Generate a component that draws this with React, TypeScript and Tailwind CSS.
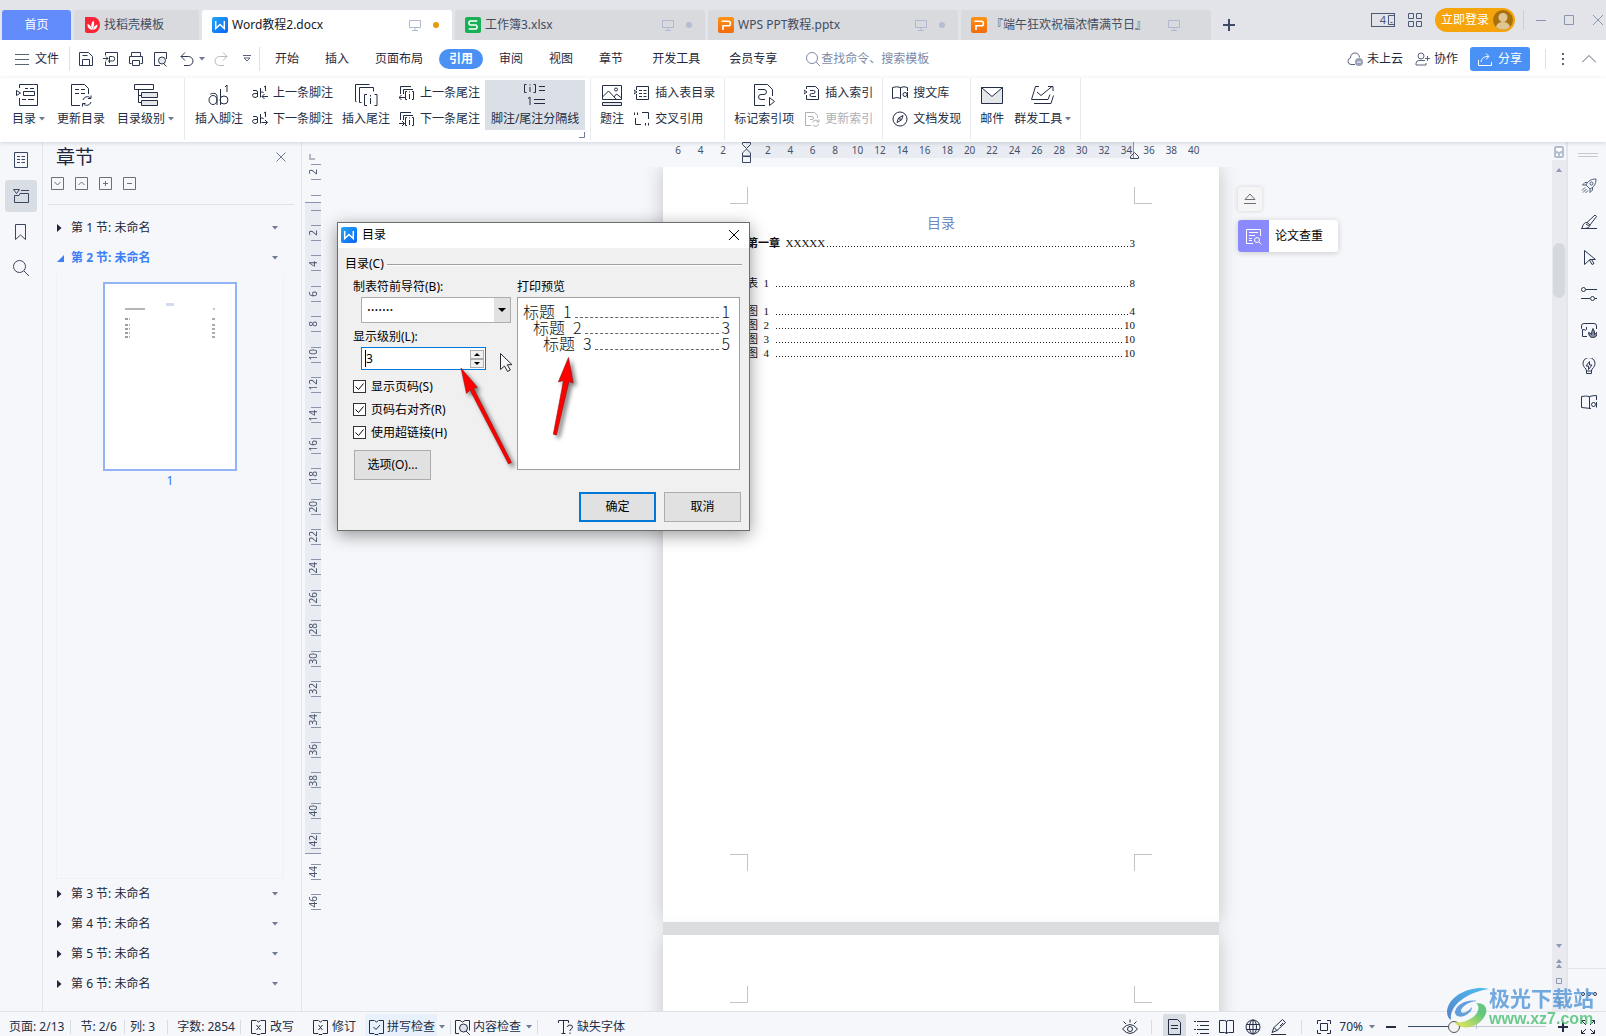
import React from "react";

type IconProps = {
  w?: number;
  h?: number;
  d?: string;
  className?: string;
  sw?: number;
  children?: React.ReactNode;
};

function Icon({ w = 16, h = 16, d, className = "", sw = 1, children }: IconProps) {
  return (
    <svg
      width={w}
      height={h}
      viewBox={`0 0 ${w} ${h}`}
      fill="none"
      stroke="currentColor"
      strokeWidth={sw}
      className={`shrink-0 ${className}`}
      aria-hidden="true"
    >
      {d && <path d={d} />}
      {children}
    </svg>
  );
}

function Caret({ className = "" }: { className?: string }) {
  return (
    <svg width="6" height="4" viewBox="0 0 6 4" className={`shrink-0 text-[#6f7a93] ${className}`} aria-hidden="true">
      <path d="M0 0h6L3 3.5z" fill="currentColor" />
    </svg>
  );
}

function WriterLogo() {
  return (
    <svg width="16" height="16" viewBox="0 0 16 16" className="shrink-0" aria-hidden="true">
      <defs>
        <linearGradient id="writer" x1="0" y1="0" x2="1" y2="1">
          <stop offset="0" stopColor="#22a7f8" />
          <stop offset="1" stopColor="#0d62f5" />
        </linearGradient>
      </defs>
      <rect width="16" height="16" rx="2" fill="url(#writer)" />
      <path d="M3.7 4v7.500L8 7.500l4.300 4V4" fill="none" stroke="#fff" strokeWidth="1.500" />
    </svg>
  );
}

function SheetLogo() {
  return (
    <svg width="16" height="16" viewBox="0 0 16 16" className="shrink-0" aria-hidden="true">
      <rect width="16" height="16" rx="2" fill="#17b054" />
      <path d="M12.300 4H5.500Q4 4 4 5.500V6.500Q4 8 5.500 8h5Q12 8 12 9.500v1Q12 12 10.500 12H3.700" fill="none" stroke="#fff" strokeWidth="1.600" />
    </svg>
  );
}

function SlideLogo() {
  return (
    <svg width="16" height="16" viewBox="0 0 16 16" className="shrink-0" aria-hidden="true">
      <defs>
        <linearGradient id="slide" x1="0" y1="0" x2="0" y2="1">
          <stop offset="0" stopColor="#ff9314" />
          <stop offset="1" stopColor="#f26a0d" />
        </linearGradient>
      </defs>
      <rect width="16" height="16" rx="2" fill="url(#slide)" />
      <path d="M3.500 4.200h7Q12.300 4.200 12.300 6v1Q12.300 8.800 10.500 8.800H5V13" fill="none" stroke="#fff" strokeWidth="1.600" />
    </svg>
  );
}

function DocerLogo() {
  return (
    <svg width="15" height="16" viewBox="0 0 15 16" className="shrink-0" aria-hidden="true">
      <path d="M0 0h8a7 8 0 0 1 0 16H2a2 2 0 0 1-2-2z" fill="#fb2437" />
      <path d="M7 13C3 12 2.500 9.500 2.500 7 5 8 6.500 9.500 7 13zM7.300 13C5.500 9 6 6 8.500 3.500 9.500 6 9.500 9 7.300 13zM8 13c.500-3 2-5 4.500-5.500 0 3-1.500 5-4.500 5.500z" fill="#fff" />
    </svg>
  );
}

const monitor = "M.5 1.500h11v7H.5zM6 8.500v3M3 11.500h6";

function DocTab({ logo, title, active, dot = true }: { logo: React.ReactNode; title: string; active?: boolean; dot?: boolean }) {
  return (
    <button
      type="button"
      className={`flex h-[30px] w-[250px] items-center rounded-t-[3px] pr-[13px] pl-[10px] ${active ? "bg-white text-[#15181f]" : "bg-[#d9dade] text-[#424c63]"}`}
    >
      {logo}
      <span className="ml-1 flex-1 truncate text-left">{title}</span>
      <Icon w={12} h={12} d={monitor} className="text-[#b0b9d0]" />
      <span className={`ml-3 size-[6px] rounded-full ${dot ? (active ? "bg-[#e69b0c]" : "bg-[#b4bdd2]") : "bg-transparent"}`} />
    </button>
  );
}

function TitleBar() {
  return (
    <header className="flex h-10 items-start justify-between bg-[#e2e4e9]">
      <div className="flex min-w-0 gap-[3px] pt-[10px] pl-[2px]">
        <button type="button" className="h-[30px] w-[69px] rounded-t-[3px] bg-[#628cfb] text-white">首页</button>
        <button type="button" className="flex h-[30px] w-[125px] items-center gap-1 rounded-t-[3px] bg-[#d9dade] pl-[11px] text-[#424c63]">
          <DocerLogo />
          找稻壳模板
        </button>
        <DocTab logo={<WriterLogo />} title="Word教程2.docx" active />
        <DocTab logo={<SheetLogo />} title="工作簿3.xlsx" />
        <DocTab logo={<SlideLogo />} title="WPS PPT教程.pptx" />
        <DocTab logo={<SlideLogo />} title="『端午狂欢祝福浓情满节日』" dot={false} />
        <button type="button" aria-label="新建标签" className="ml-2 flex h-[30px] w-[14px] items-center text-[#3f4b66]">
          <Icon w={14} h={14} sw={2} d="M7 1v12M1 7h12" />
        </button>
      </div>
      <div className="flex h-10 items-center pr-[3px] text-[#4e5a75]">
        <button type="button" aria-label="窗口数" className="flex h-[14px] w-6 items-center justify-end gap-px border border-current text-[11px] leading-[12px]">
          4
          <Icon w={7} h={12} d="M7 1.500H1.500v9H7M3.500 8.500h2" />
        </button>
        <button type="button" aria-label="应用" className="ml-[13px]">
          <Icon w={14} h={14} d="M.5.5h5v5h-5zM8.500.5h5v5h-5zM.5 8.500h5v5h-5zM8.500 8.500h5v5h-5z" />
        </button>
        <button type="button" className="ml-[13px] flex h-6 w-20 items-center justify-between rounded-full bg-[#f5a50b] pr-[2px] pl-[6px] text-white">
          立即登录
          <svg width="20" height="20" viewBox="0 0 20 20" aria-hidden="true">
            <circle cx="10" cy="10" r="10" fill="#a9710c" />
            <circle cx="10" cy="7.500" r="4.500" fill="#dfc594" />
            <path d="M3 17c1-4 4-5 7-5s6 1 7 5a10 10 0 0 1-14 0z" fill="#dfc594" />
          </svg>
        </button>
        <span className="ml-2 h-5 w-px bg-[#cbced6]" />
        <button type="button" aria-label="最小化" className="ml-3 text-[#8a96b0]"><Icon w={10} h={10} d="M0 5.500h10" /></button>
        <button type="button" aria-label="最大化" className="ml-[18px] text-[#8a96b0]"><Icon w={10} h={10} d="M.5.5h9v9h-9z" /></button>
        <button type="button" aria-label="关闭" className="ml-[19px] text-[#8a96b0]"><Icon w={10} h={10} d="M0 0l10 10M10 0L0 10" /></button>
      </div>
    </header>
  );
}

function MenuRow() {
  return (
    <nav className="flex h-[38px] items-center justify-between bg-white text-[#1f2940]">
      <div className="flex items-center whitespace-nowrap">
        <button type="button" className="ml-[15px] flex items-center gap-[6px]">
          <Icon w={14} h={12} d="M0 1.500h14M0 6.500h14M0 11.500h14" className="text-[#5a6478]" />
          文件
        </button>
        <span className="ml-[10px] h-6 w-px bg-[#dde0e6]" />
        <div className="ml-2 flex items-center gap-[9px] text-[#2e3850]">
          <Icon d="M1.500 14.500v-13h9l4 4v9zM4.500 14.500V8.500h7v6M4.500 4.500h5" />
          <Icon d="M2.500 4.500v-3h12v13h-12v-4M0 7.500h5M3 5.500l2 2-2 2M6.500 12V5.500h3a2 2 0 0 1 0 4.500H5" />
          <Icon d="M3.500 5.500v-4h9v4M3.500 12.500h-2v-7h13v7h-2M4.500 9.500h7v5h-7z" />
          <Icon><path d="M7 14.500H1.500v-13h12V8M13.500 15.500l-2.500-2.500" /><circle cx="9" cy="9.500" r="3.500" fill="#e4e7ec" /></Icon>
          <Icon w={14} h={16} d="M5 1.500l-4 4 4 4M1 5.500h7.500a4.500 4.500 0 0 1 0 9H4" className="ml-[2px]" />
        </div>
        <Caret className="ml-[5px]" />
        <Icon w={14} h={16} d="M9 1.500l4 4-4 4M13 5.500H5.500a4.500 4.500 0 0 0 0 9H10" className="ml-[9px] text-[#b3b8c2]" />
        <Icon w={8} h={8} d="M0 .5h8M1 3l3 3 3-3z" className="ml-[15px] text-[#5a6478]" />
        <span className="ml-2 h-6 w-px bg-[#dde0e6]" />
        <div className="ml-[15px] flex items-center gap-[26px]">
          <button type="button">开始</button>
          <button type="button">插入</button>
          <button type="button">页面布局</button>
          <button type="button" className="-mx-[10px] h-5 rounded-full bg-[#4a90f5] px-[10px] font-bold text-white">引用</button>
          <button type="button">审阅</button>
          <button type="button">视图</button>
          <button type="button">章节</button>
          <button type="button" className="ml-[3px]">开发工具</button>
          <button type="button" className="ml-[3px]">会员专享</button>
          <label className="ml-[3px] flex items-center gap-px text-[#7e8aa5]">
            <Icon w={14} h={14}><circle cx="6" cy="6" r="5.500" /><path d="M10 10l4 4" /></Icon>
            <input aria-label="查找命令、搜索模板" placeholder="查找命令、搜索模板" className="w-[130px] bg-transparent text-[12px] leading-[18px] outline-none placeholder:text-[#7e8aa5]" />
          </label>
        </div>
      </div>
      <div className="flex items-center whitespace-nowrap pr-[10px]">
        <button type="button" className="flex items-center gap-1">
          <Icon className="text-[#5a6478]"><path d="M8 13.500H4a3.300 3.300 0 0 1-.5-6.500C3.500 3.500 5.500 2 8 2s4.300 1.700 4.500 4.500" /><circle cx="12" cy="11" r="4" fill="#98a1b5" stroke="none" /><path d="M10 11h4" stroke="#fff" /></Icon>
          未上云
        </button>
        <button type="button" className="ml-3 flex items-center gap-1">
          <Icon w={15} h={14} className="text-[#5a6478]"><circle cx="6" cy="4" r="3" /><path d="M10 8.500H4a3 3 0 0 0-3 3v1.500h10v-2M10 6.500h5M12.500 4v5" /></Icon>
          协作
        </button>
        <button type="button" className="ml-3 flex h-6 w-15 items-center justify-center gap-[6px] rounded-[3px] bg-[#4a91f6] text-white">
          <Icon w={14} h={13} d="M.5 7v5.500h13V9M3 9c.5-4 3-5.500 7.500-5.500M8 .5l3 3-3 3" />
          分享
        </button>
        <span className="ml-[15px] h-5 w-px bg-[#dde0e6]" />
        <button type="button" aria-label="更多" className="ml-[16px] flex flex-col gap-[3px] text-[#5a6478]">
          <span className="size-[2px] bg-current" /><span className="size-[2px] bg-current" /><span className="size-[2px] bg-current" />
        </button>
        <button type="button" aria-label="收起功能区" className="ml-[18px] text-[#5a6478]"><Icon w={14} h={8} d="M0 7.500l7-7 7 7" /></button>
      </div>
    </nav>
  );
}

function Big({ label, caret, active, children }: { label: string; caret?: boolean; active?: boolean; children: React.ReactNode }) {
  return (
    <button
      type="button"
      className={`flex flex-col items-center ${active ? "-ml-1 mt-[2px] h-[50px] w-[100px] bg-[#dae0e6] pt-[3px]" : "pt-[5px]"}`}
    >
      {children}
      <span className="mt-[3px] flex items-center gap-[3px] leading-[18px]">
        {label}
        {caret && <Caret />}
      </span>
    </button>
  );
}

function Small({ label, icon, disabled }: { label: string; icon: React.ReactNode; disabled?: boolean }) {
  return (
    <button type="button" disabled={disabled} className={`flex h-[26px] items-center gap-[5px] ${disabled ? "text-[#adb0b5]" : ""}`}>
      {icon}
      {label}
    </button>
  );
}

function Group({ className = "gap-[10px] px-[9px]", children }: { className?: string; children: React.ReactNode }) {
  return <div className={`flex h-[62px] items-start border-r border-[#e8eaee] ${className}`}>{children}</div>;
}

function Pair({ children }: { children: React.ReactNode }) {
  return <div className="flex flex-col pt-[2px]">{children}</div>;
}

function AbIcon({ small, arrow }: { small?: boolean; arrow?: "left" | "right" }) {
  if (!small) {
    return (
      <Icon w={22} h={24}>
        <ellipse cx="5" cy="17" rx="4" ry="4.500" />
        <path d="M2 11.500c1-1.500 7-2 7 1.500v9M12.500 6v16" />
        <circle cx="16" cy="17" r="4" />
        <path d="M17 4l2-2v7" />
      </Icon>
    );
  }
  return (
    <Icon>
      <path d="M1 5.500h3q1.500 0 1.500 1.500v5M5.500 8.500H3Q.5 8.500.5 10.300T3 12.500q2 0 2.500-1.500M8.500 3v9.500M8.500 7q3-.5 3 1M12 2l1.500-1v5" />
      {arrow === "left" ? <path d="M16 11.500h-6M12.500 9L10 11.500l2.500 2.500" /> : <path d="M9.500 11.500h6M13 9l2.500 2.500L13 14" />}
    </Icon>
  );
}

function EndIcon({ arrow }: { arrow: "left" | "right" }) {
  return (
    <Icon>
      <path d="M1.500 9V1.500H12M4.500 9V4.500H14M8 6.500H6.500v8H8M13 6.500h1.500v8H13M10.500 9v5M10.500 6.500v1" />
      {arrow === "left" ? <path d="M6 12.500H0M2.500 10L0 12.500 2.500 15" /> : <path d="M0 12.500h5.500M3 10l2.500 2.500L3 15" />}
    </Icon>
  );
}

function Ribbon() {
  return (
    <div className="relative z-10 flex h-16 bg-white whitespace-nowrap text-[#232d44] shadow-[0_1px_4px_rgba(60,70,90,0.2)]">
      <Group className="gap-3 pr-[10px] pl-3">
        <Big label="目录" caret>
          <Icon w={22} h={24} d="M3.500 5V1.500h14l4 0v21h-18V15M.5 7.500v5l4-2.500zM9 5.500h3M14 5.500h4M7.500 8.500h11v4h-11zM6 16.500h4M12 16.500h6" className="mr-1" />
        </Big>
        <Big label="更新目录">
          <Icon w={22} h={24} d="M10 22.500H1.500v-21h13l4 4V11M5 6.500h4M11 6.500h4M5 10.500h4M11 10.500h4M13 17a4.500 4.500 0 0 1 7.500-2M21 12.500v3h-3M21 19a4.500 4.500 0 0 1-7.500 2M12.500 23.500v-3h3" />
        </Big>
        <Big label="目录级别" caret>
          <Icon w={24} h={24}><path d="M.5 1.500h19v5H.5zM4.500 6.500v13h3M4.500 12.500h3" /><path d="M7.500 9.500h16v5h-16zM7.500 17.500h16v5h-16z" fill="#e4e7ea" /></Icon>
        </Big>
      </Group>
      <Group className="gap-[9px] pr-[5px] pl-[10px]">
        <Big label="插入脚注"><AbIcon /></Big>
        <Pair>
          <Small label="上一条脚注" icon={<AbIcon small arrow="left" />} />
          <Small label="下一条脚注" icon={<AbIcon small arrow="right" />} />
        </Pair>
        <Big label="插入尾注">
          <Icon w={23} h={24} d="M1.500 18.500H.5V1.500h14M6.500 19.500h-2v-15h14v4M12 11.500H9.500v11H12M19.500 11.500H22v11h-2.500M15.500 15v6M15.500 12v1.500" />
        </Big>
        <Pair>
          <Small label="上一条尾注" icon={<EndIcon arrow="left" />} />
          <Small label="下一条尾注" icon={<EndIcon arrow="right" />} />
        </Pair>
        <div className="flex flex-col items-end">
          <Big label="脚注/尾注分隔线" active>
            <Icon w={24} h={24} d="M3.500 1.500h-2v8h2M10.500 1.500h2v8h-2M7 4v5M7 1.500v1M16 3.500h6M16 7.500h6M5 15.500l2-1.500v8M11 16.500h11M11 20.500h11" />
          </Big>
          <Icon w={6} h={6} d="M5.500 0v5.500H0" className="mt-[2px] text-[#6f7a93]" />
        </div>
      </Group>
      <Group>
        <Big label="题注">
          <Icon w={20} h={24}><path d="M.5 2.500h19v14H.5zM.5 14l6-6 8 8.500M12 14l2.500-3 5 4" /><circle cx="14" cy="6.500" r="1.500" /><path d="M.5 19.500h19v3H.5z" fill="#e4e7ea" /></Icon>
        </Big>
        <Pair>
          <Small label="插入表目录" icon={<Icon d="M2.500 5v-3.500h12v13h-12V9M0 5l3 2-3 2zM5 5.500h3M9.500 5.500h3M5 8.500h3M9.500 8.500h3M5 11.500h3M9.500 11.500h3" />} />
          <Small label="交叉引用" icon={<Icon d="M.5 4V1.500M3.500 4V1.500M8 1.500h6.500V8M1.500 7v6.500H7M11.500 12v2.500M14.500 12v2.500" />} />
        </Pair>
      </Group>
      <Group>
        <Big label="标记索引项">
          <Icon w={21} h={24} d="M11 22.500H.5v-21h13l5 5V13M4 6.500h6a2.500 2.500 0 0 1 0 5H7a2.500 2.500 0 0 0 0 5h4M15.500 14.500v8l5-4z" />
        </Big>
        <Pair>
          <Small label="插入索引" icon={<Icon d="M2.500 4V1.500h9l3 3v10h-12V10M0 5l3 2-3 2zM6 5.500h3.500a1.500 1.500 0 0 1 0 3H7.500a1.500 1.500 0 0 0 0 3H12" />} />
          <Small label="更新索引" disabled icon={<Icon d="M7 14.500H1.500v-13h9l3 3V7M4 5.500h4a1.500 1.500 0 0 1 0 3H6M8.500 11.500a3.500 3.500 0 0 1 6-1M15 8.500v2.500h-2.500M15 13a3.500 3.500 0 0 1-6 1" />} />
        </Pair>
      </Group>
      <Group>
        <Pair>
          <Small label="搜文库" icon={<Icon><path d="M8.500 2.500v11M9 13.500q-4-2-8.500 0v-11q4-1.500 8 0 3.500-1.500 7 0V6" /><circle cx="13" cy="9.500" r="2" /><path d="M15.500 7v6" /></Icon>} />
          <Small label="文档发现" icon={<Icon><circle cx="8" cy="8" r="7" /><path d="M11 4.500L9.500 9 5 11.500 6.500 7z" /><circle cx="8" cy="8" r=".5" /></Icon>} />
        </Pair>
      </Group>
      <Group>
        <Big label="邮件">
          <Icon w={22} h={24}><path d="M.5 4.500h21v16H.5z" fill="#e4e7ea" /><path d="M.5 4.500h21L11 13.500z" fill="#fff" /></Icon>
        </Big>
        <Big label="群发工具" caret>
          <Icon w={24} h={24} d="M8 3.500H4.500L.5 16.500H17l2-5M6 9l4 3.500L21 3.500M17 3.500h5V8M3 20.500h17l2.500-8" />
        </Big>
      </Group>
    </div>
  );
}

function LeftRail() {
  return (
    <aside className="flex w-[43px] shrink-0 flex-col items-center gap-1 border-r border-[#e3e5ea] pt-[2px] text-[#3b465f]">
      <button type="button" aria-label="目录" className="grid size-8 place-items-center"><Icon w={14} h={16} d="M.5.5h13v15H.5zM3 4.500h3M7.500 4.500h3.500M3 7.500h3M7.500 7.500h3.500M3 10.500h3M7.500 10.500h3.500" /></button>
      <button type="button" aria-label="章节" className="grid size-8 place-items-center rounded-[3px] bg-[#d9dee5]"><Icon d="M.5 1.500h6l-3 4zM8 2.500h8M7 5.500h8.500v9H1.500v-7H6z" /></button>
      <button type="button" aria-label="书签" className="grid size-8 place-items-center"><Icon w={12} h={16} d="M.5.5h10v15L5.500 11l-5 4.500z" /></button>
      <button type="button" aria-label="查找" className="grid size-8 place-items-center"><Icon><circle cx="6.500" cy="6.500" r="6" /><path d="M11 11l5 5" /></Icon></button>
    </aside>
  );
}

function SectionRow({ n, open }: { n: number; open?: boolean }) {
  return (
    <button type="button" className={`flex h-[30px] w-full shrink-0 items-center pr-[23px] pl-[14px] ${open ? "font-bold text-[#3d7ff8]" : "text-[#1d263a]"}`}>
      <svg width="8" height="8" viewBox="0 0 8 8" aria-hidden="true">
        {open ? <path d="M0 8h7V1z" fill="currentColor" /> : <path d="M0 0v8l4.500-4z" fill="currentColor" />}
      </svg>
      <span className="ml-[6px] flex-1 text-left">第 {n} 节: 未命名</span>
      <Caret />
    </button>
  );
}

function SectionPanel() {
  return (
    <aside className="flex w-[259px] shrink-0 flex-col border-r border-[#e3e5ea]">
      <div className="flex items-center justify-between pt-[2px] pr-[15px] pl-[13px]">
        <h2 className="text-[19px] leading-[26px] text-[#1d263a]">章节</h2>
        <button type="button" aria-label="关闭" className="text-[#6f7a93]"><Icon w={10} h={10} d="M.5.5l9 9M9.500.5l-9 9" /></button>
      </div>
      <div className="mt-[7px] ml-2 flex gap-[11px] text-[#6b7078]">
        <button type="button" aria-label="全部展开"><Icon w={13} h={13} d="M.5.5h12v12H.5zM3.500 5l3 3 3-3" /></button>
        <button type="button" aria-label="全部收起"><Icon w={13} h={13} d="M.5.5h12v12H.5zM3.500 8l3-3 3 3" /></button>
        <button type="button" aria-label="新增节"><Icon w={13} h={13} d="M.5.5h12v12H.5zM4 6.500h5M6.500 4v5" /></button>
        <button type="button" aria-label="删除节"><Icon w={13} h={13} d="M.5.5h12v12H.5zM4 6.500h5" /></button>
      </div>
      <div className="mt-[14px] mr-[7px] mb-2 ml-[5px] border-t border-[#dfe2e9]" />
      <SectionRow n={1} />
      <SectionRow n={2} open />
      <div className="mr-[17px] ml-[13px] flex min-h-0 flex-1 flex-col items-center border border-t-0 border-[#f0f1f4] pt-[9px]">
        <div className="flex h-[189px] w-[134px] flex-col border-2 border-[#92b4f7] bg-white px-5 pt-[19px]">
          <span className="mx-auto h-[3px] w-2 bg-[#d3dbee]" />
          <div className="mt-[2px] flex justify-between"><span className="h-[2px] w-5 bg-[#b4b5b7]" /><span className="size-[2px] bg-[#c3c6d0]" /></div>
          {[8, 4, 2, 2, 2].map((m, i) => (
            <div key={i} className="flex justify-between" style={{ marginTop: m }}>
              <span className="flex gap-px"><span className="h-[2px] w-[3px] bg-[#9c9ca1]" /><span className="h-[2px] w-px bg-[#b7bfae]" /></span>
              <span className="h-[2px] w-[3px] bg-[#acacac]" />
            </div>
          ))}
        </div>
        <span className="mt-px text-[#2f77ee]">1</span>
      </div>
      <SectionRow n={3} />
      <SectionRow n={4} />
      <SectionRow n={5} />
      <SectionRow n={6} />
      <div className="h-3 shrink-0" />
    </aside>
  );
}

const vMarks = [2, 0, ...Array.from({ length: 23 }, (_, i) => (i + 1) * 2)];
const hMarks = [6, 4, 2, 0, ...Array.from({ length: 20 }, (_, i) => (i + 1) * 2)];

function VerticalRuler() {
  return (
    <div className="ml-[3px] flex w-4 shrink-0 flex-col">
      <Icon w={6} h={6} sw={2} d="M1 0v5h5" className="mt-3 ml-1 text-[#b4bac6]" />
      <div className="-mt-[3px] flex h-[760px] flex-col bg-[linear-gradient(to_bottom,transparent_45px,#8a95ac_45px,#8a95ac_46px,#e9ecf2_46px,#e9ecf2_696px,#8a95ac_696px,#8a95ac_697px,transparent_697px)]">
        {vMarks.map((n, i) => (
          <div key={i} className="flex flex-1 flex-col items-end justify-center">
            <span className="h-px w-[10px] bg-[#8a95ac]" />
            <span className="flex h-[14px] w-4 items-center justify-center pr-px text-[10px] leading-[12px] text-[#475169]">
              <span className="rotate-180 [writing-mode:vertical-rl]">{n === 0 ? "" : n}</span>
            </span>
            <span className="h-px w-[10px] bg-[#8a95ac]" />
          </div>
        ))}
      </div>
    </div>
  );
}

function HorizontalRuler() {
  return (
    <div className="flex h-[25px] shrink-0 justify-center pr-[10px]">
      <div className="relative grid h-4 w-[538px] grid-cols-24 bg-[linear-gradient(to_right,transparent_79px,#e9ecf2_79px,#e9ecf2_466px,#8a95ac_466px,#8a95ac_467px,transparent_467px)] text-center text-[10px] leading-[16px] text-[#475169]">
        {hMarks.map((n, i) => (
          <span key={i}>{n === 0 ? "" : n}</span>
        ))}
        <Icon w={9} h={22} d="M.5.5h8v2l-4 4-4-4zM4.500 7l4 4v3h-8v-3zM.5 14.500h8v6h-8z" className="absolute top-0 left-[75px] text-[#3b465f]" />
        <Icon w={9} h={7} d="M4.500.5l4 4v2h-8v-2z" className="absolute top-[10px] left-[463px] text-[#3b465f]" />
      </div>
    </div>
  );
}

function TocLine({ label, page, className = "" }: { label: React.ReactNode; page: string; className?: string }) {
  return (
    <div className={`flex h-[14px] ${className}`}>
      {label}
      <span className="mt-[10px] h-px min-w-0 flex-1 bg-[repeating-linear-gradient(to_right,#222_0px,#222_1px,transparent_1px,transparent_3px)]" />
      <span className="pl-[2px]">{page}</span>
    </div>
  );
}

function Crop({ at }: { at: "top" | "bottom" }) {
  const y = at === "top" ? "h-[17px] border-b" : "h-[17px] border-t";
  return (
    <div className="flex justify-between px-[67px]">
      <span className={`w-[18px] border-r border-[#c4c4c6] ${y}`} />
      <span className={`w-[18px] border-l border-[#c4c4c6] ${y}`} />
    </div>
  );
}

function Pages() {
  const figures = [["1", "4"], ["2", "10"], ["3", "10"], ["4", "10"]];
  return (
    <div className="flex min-h-0 flex-1 justify-center overflow-hidden">
      <div className="relative w-[556px]">
        <div className="flex h-[755px] flex-col justify-between bg-white pt-5 pb-[51px] shadow-[0_0_18px_rgba(60,64,70,0.28)]">
          <div>
            <Crop at="top" />
            <div className="px-[84px] font-['Liberation_Serif','Noto_Sans_CJK_SC',serif] text-[11px] leading-[14px] text-[#111]">
              <h1 className="mt-[11px] text-center text-[14px] leading-[18px] text-[#7189c3]">目录</h1>
              <TocLine className="mt-[3px]" label={<span className="pr-[2px] font-bold">第一章&nbsp; <span className="font-normal">XXXXX</span></span>} page="3" />
              <TocLine className="mt-[26px]" label={<span className="w-[29px]">表&ensp;1</span>} page="8" />
              <div className="mt-[14px]">
                {figures.map(([n, p]) => (
                  <TocLine key={n} label={<span className="w-[29px]">图&ensp;{n}</span>} page={p} />
                ))}
              </div>
            </div>
          </div>
          <Crop at="bottom" />
        </div>
        <div className="relative z-1 h-[13px] bg-[#dbdcde]" />
        <div className="h-[755px] bg-white pt-[51px] shadow-[0_0_18px_rgba(60,64,70,0.28)]"><Crop at="top" /></div>
        <div className="absolute top-5 left-full ml-[19px] flex flex-col gap-[9px]">
          <button type="button" aria-label="收起" className="grid size-6 place-items-center rounded-[3px] bg-[#f5f5f6] text-[#6b7078] shadow-[0_0_4px_rgba(0,0,0,0.15)]">
            <Icon w={12} h={12} d="M1 6.500L6 1l5 5.500zM0 10.500h12" />
          </button>
          <button type="button" className="flex h-8 w-[100px] items-center overflow-hidden rounded-[3px] bg-white text-black shadow-[0_1px_6px_rgba(0,0,0,0.18)]">
            <span className="grid h-8 w-[31px] place-items-center bg-[#8a8afc] text-white">
              <Icon w={17} h={17}><path d="M8 15.500H1.500v-14h14V8M4 4.500h9M4 7.500h6M4 10.500h3M4 12.500h3" /><circle cx="12" cy="12" r="2.500" /><path d="M14 14l2.500 2.500" /></Icon>
            </span>
            <span className="ml-[6px]">论文查重</span>
          </button>
        </div>
      </div>
    </div>
  );
}

function ScrollColumn() {
  return (
    <div className="flex w-4 shrink-0 flex-col items-center border-r-2 border-[#e3e5ea] text-[#8e9ab2]">
      <svg width="10" height="12" viewBox="0 0 10 12" className="mt-1 mb-[2px] shrink-0" aria-hidden="true">
        <rect width="10" height="12" rx="2" fill="#b3bdd0" />
        <path d="M2 2h6v2.500L5 6 2 4.500zM2 7.500h2V10H2zM6 7.500h2V10H6z" fill="#fff" />
      </svg>
      <div className="flex w-full flex-1 flex-col items-center bg-[#e9eaef]">
        <svg width="6" height="4" viewBox="0 0 6 4" className="mt-2" aria-hidden="true"><path d="M0 4h6L3 0z" fill="currentColor" /></svg>
        <div className="mt-[71px] h-[55px] w-3 rounded-full bg-[#d5d8df]" />
        <div className="flex-1" />
        <svg width="6" height="71" viewBox="0 0 6 71" aria-hidden="true">
          <path d="M0 4h6L3 8zM0 23h6l-3-4zM0 28h6l-3-4zM0 57h6l-3 4zM0 62h6l-3 4z" fill="currentColor" />
          <path d="M.5 38.500h5v5h-5z" fill="none" stroke="currentColor" />
        </svg>
      </div>
    </div>
  );
}

function RightRail() {
  return (
    <aside className="flex w-[38px] shrink-0 flex-col items-center pt-[11px] text-[#2c3650]">
      <span className="ml-[2px] h-1 w-5 border-y border-[#c3c7cf]" />
      <div className="mt-[21px] flex flex-col gap-5 pl-1">
        <Icon className="text-[#4f5c7a]"><path d="M15 1c-5 0-8 2-10 6l4 4c4-2 6-5 6-10zM5 7H1.500L4 4.500h3M9 11v3.500l2.500-2.500V9M4 9.500L1 12.500M5.500 11L2 14.500M7 12.500L4.500 15" /><circle cx="10.500" cy="5.500" r="1.500" /></Icon>
        <Icon d="M0 14.500h16M14 1l1.500 1.500L9 11 6 8.500zM6 8.500c-3 0-4 2-5 6h3c3-.5 4.500-1 5-3.500M5 10l3 2" />
        <Icon d="M3.500.5l11 9H9l-5.500 5zM8.500 10l2.500 4.500 2-1-2.500-4" />
        <Icon><path d="M5 3.500h11M0 12.500h9M14 12.500h2" /><circle cx="2.500" cy="3.500" r="2" /><circle cx="11.500" cy="12.500" r="2" /></Icon>
        <Icon>
          <path d="M6 14.500H1.500V8M.5 6.500q1 2 2.500 1 1.500 1.500 2.500 0V5M.5 6.500V4Q.5 1.500 3 1.500h10q2.500 0 2.500 2.500v3" />
          <path d="M11.500 15.500q-3.500 0-4-5 2 0 3 2 0-3.500 1.500-6 2 2.500 1.500 6 1-1.500 2.500-2 .5 5-4.500 5z" fill="#2c3650" fillOpacity=".55" />
        </Icon>
        <Icon d="M5.500 13q0-2-2-3.500a6 6 0 1 1 9 0q-2 1.500-2 3.500zM5.500 15.500h5v-2.500M5.500 13v2.500M8.500 3.500L5 8h2.500v3.500L11 7H8.500z" />
        <Icon><path d="M8.500 2.500v12M10 14.500l-9.500-1V2.500q4-1 8 0 3.500-1 7-1V6" /><circle cx="12.500" cy="10.500" r="2" /><path d="M15.500 8v5.500" /></Icon>
      </div>
      <div className="flex-1" />
      <div className="flex h-[43px] w-full justify-center gap-[2px] border-t border-[#e0e3e9] pt-[23px] pl-1">
        <span className="size-1 rounded-full border border-current" /><span className="size-1 rounded-full border border-current" /><span className="size-1 rounded-full border border-current" />
      </div>
    </aside>
  );
}

function Check({ label }: { label: string }) {
  return (
    <label className="flex h-[23px] items-center gap-[5px]">
      <span className="grid size-[13px]">
        <input type="checkbox" defaultChecked className="col-start-1 row-start-1 size-[13px] appearance-none border border-[#333] bg-white" />
        <Icon w={13} h={13} d="M2.500 6.500l3 3 5-6" className="pointer-events-none col-start-1 row-start-1" />
      </span>
      {label}
    </label>
  );
}

function PreviewLine({ n, page, indent }: { n: number; page: number; indent: string }) {
  return (
    <div className={`flex h-4 items-center font-light ${indent}`}>
      <span>标题&ensp;{n}</span>
      <span className="mt-3 ml-[3px] flex-1 border-t border-dashed border-[#666]" />
      <span className="ml-[2px]">{page}</span>
    </div>
  );
}

function TocDialog() {
  return (
    <section role="dialog" aria-label="目录" className="absolute top-[222px] left-[337px] z-20 w-[413px] border border-[#6d6d6d] bg-[#f0f0f0] text-black shadow-[0_4px_16px_rgba(0,0,0,0.4)]">
      <div className="flex h-[25px] items-center bg-white pr-[10px] pb-px pl-[3px]">
        <WriterLogo />
        <span className="ml-[5px] flex-1">目录</span>
        <button type="button" aria-label="关闭"><Icon w={10} h={10} d="M0 0l10 10M10 0L0 10" /></button>
      </div>
      <div className="mt-[7px] flex items-center gap-[3px] pr-[7px] pl-[7px] leading-[18px]">
        目录(C)
        <span className="h-px flex-1 bg-[#a0a0a0] shadow-[0_1px_0_#fff]" />
      </div>
      <div className="mt-[5px] flex justify-between pr-[9px] pl-[15px] leading-[18px]">
        <div className="flex w-[159px] flex-col items-start">
          <label htmlFor="leader">制表符前导符(B):</label>
          <div className="mt-[1px] ml-2 grid h-[26px] w-[150px]">
            <select id="leader" className="col-start-1 row-start-1 appearance-none border border-[#adadad] bg-white pl-[5px] text-[14px] leading-[18px]">
              <option>·······</option>
            </select>
            <span className="pointer-events-none col-start-1 row-start-1 m-px grid w-[16px] place-items-center justify-self-end bg-[#e1e1e1]">
              <svg width="8" height="4" viewBox="0 0 8 4" aria-hidden="true"><path d="M0 0h8L4 4z" /></svg>
            </span>
          </div>
          <label htmlFor="levels" className="mt-[5px]">显示级别(L):</label>
          <div className="mt-[1px] ml-2 flex h-[23px] w-[125px] items-center border border-[#0078d7] bg-white pr-[1px] pl-[3px]">
            <span className="h-[17px] w-px bg-black" />
            <input id="levels" defaultValue="3" className="min-w-0 flex-1 bg-transparent text-[12px] outline-none" />
            <span className="flex w-[14px] flex-col">
              <button type="button" aria-label="增加" className="grid h-[9px] place-items-center border border-[#adadad] bg-[#f0f0f0]"><svg width="6" height="3" viewBox="0 0 6 3" aria-hidden="true"><path d="M0 3h6L3 0z" /></svg></button>
              <button type="button" aria-label="减少" className="grid h-[9px] place-items-center border border-[#adadad] bg-[#f0f0f0]"><svg width="6" height="3" viewBox="0 0 6 3" aria-hidden="true"><path d="M0 0h6L3 3z" /></svg></button>
            </span>
          </div>
          <div className="mt-[5px]">
            <Check label="显示页码(S)" />
            <Check label="页码右对齐(R)" />
            <Check label="使用超链接(H)" />
          </div>
          <button type="button" className="mt-[6px] ml-px h-[30px] w-[77px] border border-[#adadad] bg-[#e1e1e1]">选项(O)...</button>
        </div>
        <div className="flex w-[223px] flex-col">
          <span>打印预览</span>
          <div className="mt-[1px] h-[173px] border border-[#a0a0a0] bg-white pt-[5px] pr-[9px] pl-[5px] font-['Noto_Sans_CJK_SC',sans-serif] text-[16px] leading-[16px] text-[#111]">
            <PreviewLine n={1} page={1} indent="pl-0" />
            <PreviewLine n={2} page={3} indent="pl-[10px]" />
            <PreviewLine n={3} page={5} indent="pl-5" />
          </div>
        </div>
      </div>
      <div className="mt-3 mb-2 flex justify-end gap-2 pr-2">
        <button type="button" className="h-[30px] w-[77px] border-2 border-[#0078d7] bg-[#e1e1e1]">确定</button>
        <button type="button" className="h-[30px] w-[77px] border border-[#adadad] bg-[#e1e1e1]">取消</button>
      </div>
      <svg width="411" height="307" viewBox="1 1 411 307" className="pointer-events-none absolute top-0 left-0 overflow-visible" aria-hidden="true">
        <g fill="#fe0000" stroke="#8e1410" strokeWidth=".6" className="drop-shadow-[3px_3px_2px_rgba(0,0,0,0.5)]">
          <path d="M124 146l16.500 19.500-4 .8L174.500 240.500l-3 1.500L133 168l-3.500 3.500z" />
          <path d="M231.500 135.500l4.700 25.500-4.200-1.500L219.500 213l-3.200-.8L226.500 158.500l-5.200 1.500z" />
        </g>
        <path d="M163.500 131.500v16l4-3.500 3 5.500 2.800-1.500-3-5.300h4.700z" fill="#f7f7f7" stroke="#2a2a33" />
      </svg>
    </section>
  );
}

function Sep({ className = "" }: { className?: string }) {
  return <span className={`h-[14px] w-px shrink-0 bg-[#d8dce3] ${className}`} />;
}

const book = "M5 1.500H.5v13h4.500l1 1h3l1-1h4.500v-13H10M5.500 1.500l2 1.500 2-1.500";

function StatusBar() {
  return (
    <footer className="h-[25px] shrink-0 overflow-hidden border-t border-[#dfe2e8] bg-[#f5f7fa] whitespace-nowrap text-[#232d44]">
      <div className="flex h-[29px] items-center justify-between">
        <div className="flex items-center pl-[9px]">
          <span>页面: 2/13</span><Sep className="mr-[9px] ml-[6px]" />
          <span>节: 2/6</span><Sep className="mr-[5px] ml-[7px]" />
          <span>列: 3</span><Sep className="mr-[9px] ml-3" />
          <span>字数: 2854</span><Sep className="mr-[10px] ml-[5px]" />
          <button type="button" className="flex items-center gap-1"><Icon w={15} h={16} d={book + "M5.500 6l4 5M9.500 6l-4 5"} />改写</button>
          <button type="button" className="ml-[19px] flex items-center gap-1"><Icon w={15} h={16} d={book + "M5.500 6l4 5M9.500 6l-4 5"} />修订</button>
          <button type="button" className="ml-[9px] flex h-[26px] items-center gap-[3px] bg-[#e7f0fb] pr-[2px] pl-1"><Icon w={15} h={16} d={book + "M4.500 8l2.500 2.500 4-4.500"} />拼写检查</button>
          <Caret className="ml-[2px]" />
          <Sep className="mr-1 ml-[5px]" />
          <button type="button" className="flex items-center gap-[3px]">
            <Icon w={15} h={16}><path d="M4 14.500H.5v-13H5l2.500 1.500L10 1.500h4.500v10M11 12l4 4" /><circle cx="8.500" cy="9" r="4" fill="#dfe3e9" /></Icon>内容检查
          </button>
          <Caret className="ml-[5px]" />
          <Sep className="mr-5 ml-[5px]" />
          <button type="button" className="flex items-center gap-1"><Icon w={15} h={16} d="M.5 4V1.500h10V4M5.500 1.500v13M3.500 14.500h4M9.500 8q0-2 2.500-2t2.500 2q0 1.500-2.500 3v1M12 13.500v1.500" />缺失字体</button>
        </div>
        <div className="flex items-center pr-[11px]">
          <button type="button" aria-label="护眼模式"><Icon w={16} h={16}><path d="M.5 10Q8 1 15.500 10 8 19 .5 10zM8 .5v3M1.500 2.500L4 5M14.500 2.500L12 5" /><circle cx="8" cy="10" r="2.500" /></Icon></button>
          <Sep className="mr-[11px] ml-[13px]" />
          <button type="button" aria-label="页面视图" className="grid h-[26px] w-[23px] place-items-center rounded-[2px] bg-[#d9dee5]"><Icon w={13} h={16} d="M.5.5h9l3 3v12H.5zM3 6.500h7M3 9.500h7" /></button>
          <button type="button" aria-label="大纲视图" className="ml-2"><Icon w={15} h={16} d="M0 2.500h2M3 2.500h12M3 6.500h1M6 6.500h9M0 10.500h2M3 10.500h12M3 14.500h1M6 14.500h9" /></button>
          <button type="button" aria-label="阅读视图" className="ml-[10px]"><Icon w={16} h={16} d="M.5 1.500h5q2 0 2 1.500 0-1.500 2-1.500h5v12h-5q-2 0-2 1.500 0-1.500-2-1.500h-5zM7.500 3v12" /></button>
          <button type="button" aria-label="网页视图" className="ml-[10px]"><Icon w={16} h={16}><circle cx="8" cy="8" r="7" /><ellipse cx="8" cy="8" rx="3.500" ry="7" /><path d="M1.500 5.500h13M1.500 10.500h13M8 1v14" /></Icon></button>
          <button type="button" aria-label="写作模式" className="ml-[10px]"><Icon w={16} h={16} d="M0 15.500h15M1 13.500l2-5L11.500.5l3 3L6 11.500zM3 8.500l3 3M9 7l3-3" /></button>
          <Sep className="mr-[15px] ml-[14px]" />
          <button type="button" aria-label="最佳显示"><Icon w={14} h={14} d="M.5 4V.5H4M10 .5h3.500V4M13.500 10v3.500H10M4 13.500H.5V10M3.500 3.500h7v7h-7z" /></button>
          <button type="button" className="ml-2 flex items-center gap-[6px]">70%<Caret /></button>
          <button type="button" aria-label="缩小" className="ml-[11px]"><Icon w={10} h={10} sw={2} d="M0 5h10" /></button>
          <span className="relative ml-3 flex items-center">
            <span className="absolute left-[68px] h-[5px] w-px bg-[#b9c1d0]" />
            <input
              type="range"
              aria-label="显示比例"
              min={0}
              max={100}
              defaultValue={32}
              className="h-3 w-[138px] appearance-none bg-[linear-gradient(to_right,#3b4a68_33%,#c3cad8_33%)] bg-[length:100%_1px] bg-center bg-no-repeat [&::-webkit-slider-thumb]:size-3 [&::-webkit-slider-thumb]:appearance-none [&::-webkit-slider-thumb]:rounded-full [&::-webkit-slider-thumb]:border [&::-webkit-slider-thumb]:border-[#555] [&::-webkit-slider-thumb]:bg-[#f3f3f3]"
            />
          </span>
          <button type="button" aria-label="放大" className="ml-3"><Icon w={10} h={10} sw={2} d="M0 5h10M5 0v10" /></button>
          <button type="button" aria-label="全屏" className="ml-[13px]"><Icon w={14} h={14} d="M.5 4V.5H4M.5.5L5 5M10 .5h3.500V4M13.500.5L9 5M13.500 10v3.500H10M13.500 13.500L9 9M4 13.500H.5V10M.5 13.500L5 9" /></button>
        </div>
      </div>
    </footer>
  );
}

function SiteBadge() {
  return (
    <div className="pointer-events-none absolute right-3 bottom-[7px] z-30 flex opacity-85">
      <svg width="43" height="42" viewBox="0 0 43 42" aria-hidden="true">
        <defs>
          <linearGradient id="blueArc" x1="1" y1="0" x2="0" y2="1">
            <stop offset="0" stopColor="#2fb6f2" />
            <stop offset="1" stopColor="#3a6fc4" />
          </linearGradient>
          <linearGradient id="greenArc" x1="1" y1="0" x2="0" y2="1">
            <stop offset="0.300" stopColor="#4cbf6a" />
            <stop offset="1" stopColor="#f4ea3c" />
          </linearGradient>
        </defs>
        <path d="M43 2C26-2 3 8 1 24c0 4 1 7 4 9C3 20 18 6 43 2z" fill="url(#blueArc)" />
        <path d="M31 14C20 12 10 18 9 25c0 5 6 6 11 3 4-2 6-5 6-8-4 5-9 7-11 5-1-4 6-10 16-11z" fill="#4b8fd6" />
        <path d="M30 16c5 4 2 12-6 16-5 3-11 4-16 3 6 8 20 7 28-2 7-8 6-17-6-17z" fill="url(#greenArc)" />
      </svg>
      <div className="flex flex-col">
        <span className="text-[21px] leading-[22px] font-bold text-[#5b9bd8]">极光下载站</span>
        <span className="font-['Liberation_Sans',sans-serif] text-[16px] leading-[20px] font-bold text-[#56c27a]">www.xz7.com</span>
      </div>
    </div>
  );
}

export default function App() {
  return (
    <div className="relative flex h-screen flex-col overflow-hidden bg-[#f5f7fa] font-['Noto_Sans','Noto_Sans_CJK_SC',sans-serif] text-[12px] leading-[18px]">
      <TitleBar />
      <MenuRow />
      <Ribbon />
      <div className="flex min-h-0 flex-1">
        <LeftRail />
        <SectionPanel />
        <VerticalRuler />
        <main className="flex min-w-0 flex-1 flex-col pl-[9px]">
          <HorizontalRuler />
          <Pages />
        </main>
        <ScrollColumn />
        <RightRail />
      </div>
      <StatusBar />
      <TocDialog />
      <SiteBadge />
    </div>
  );
}
